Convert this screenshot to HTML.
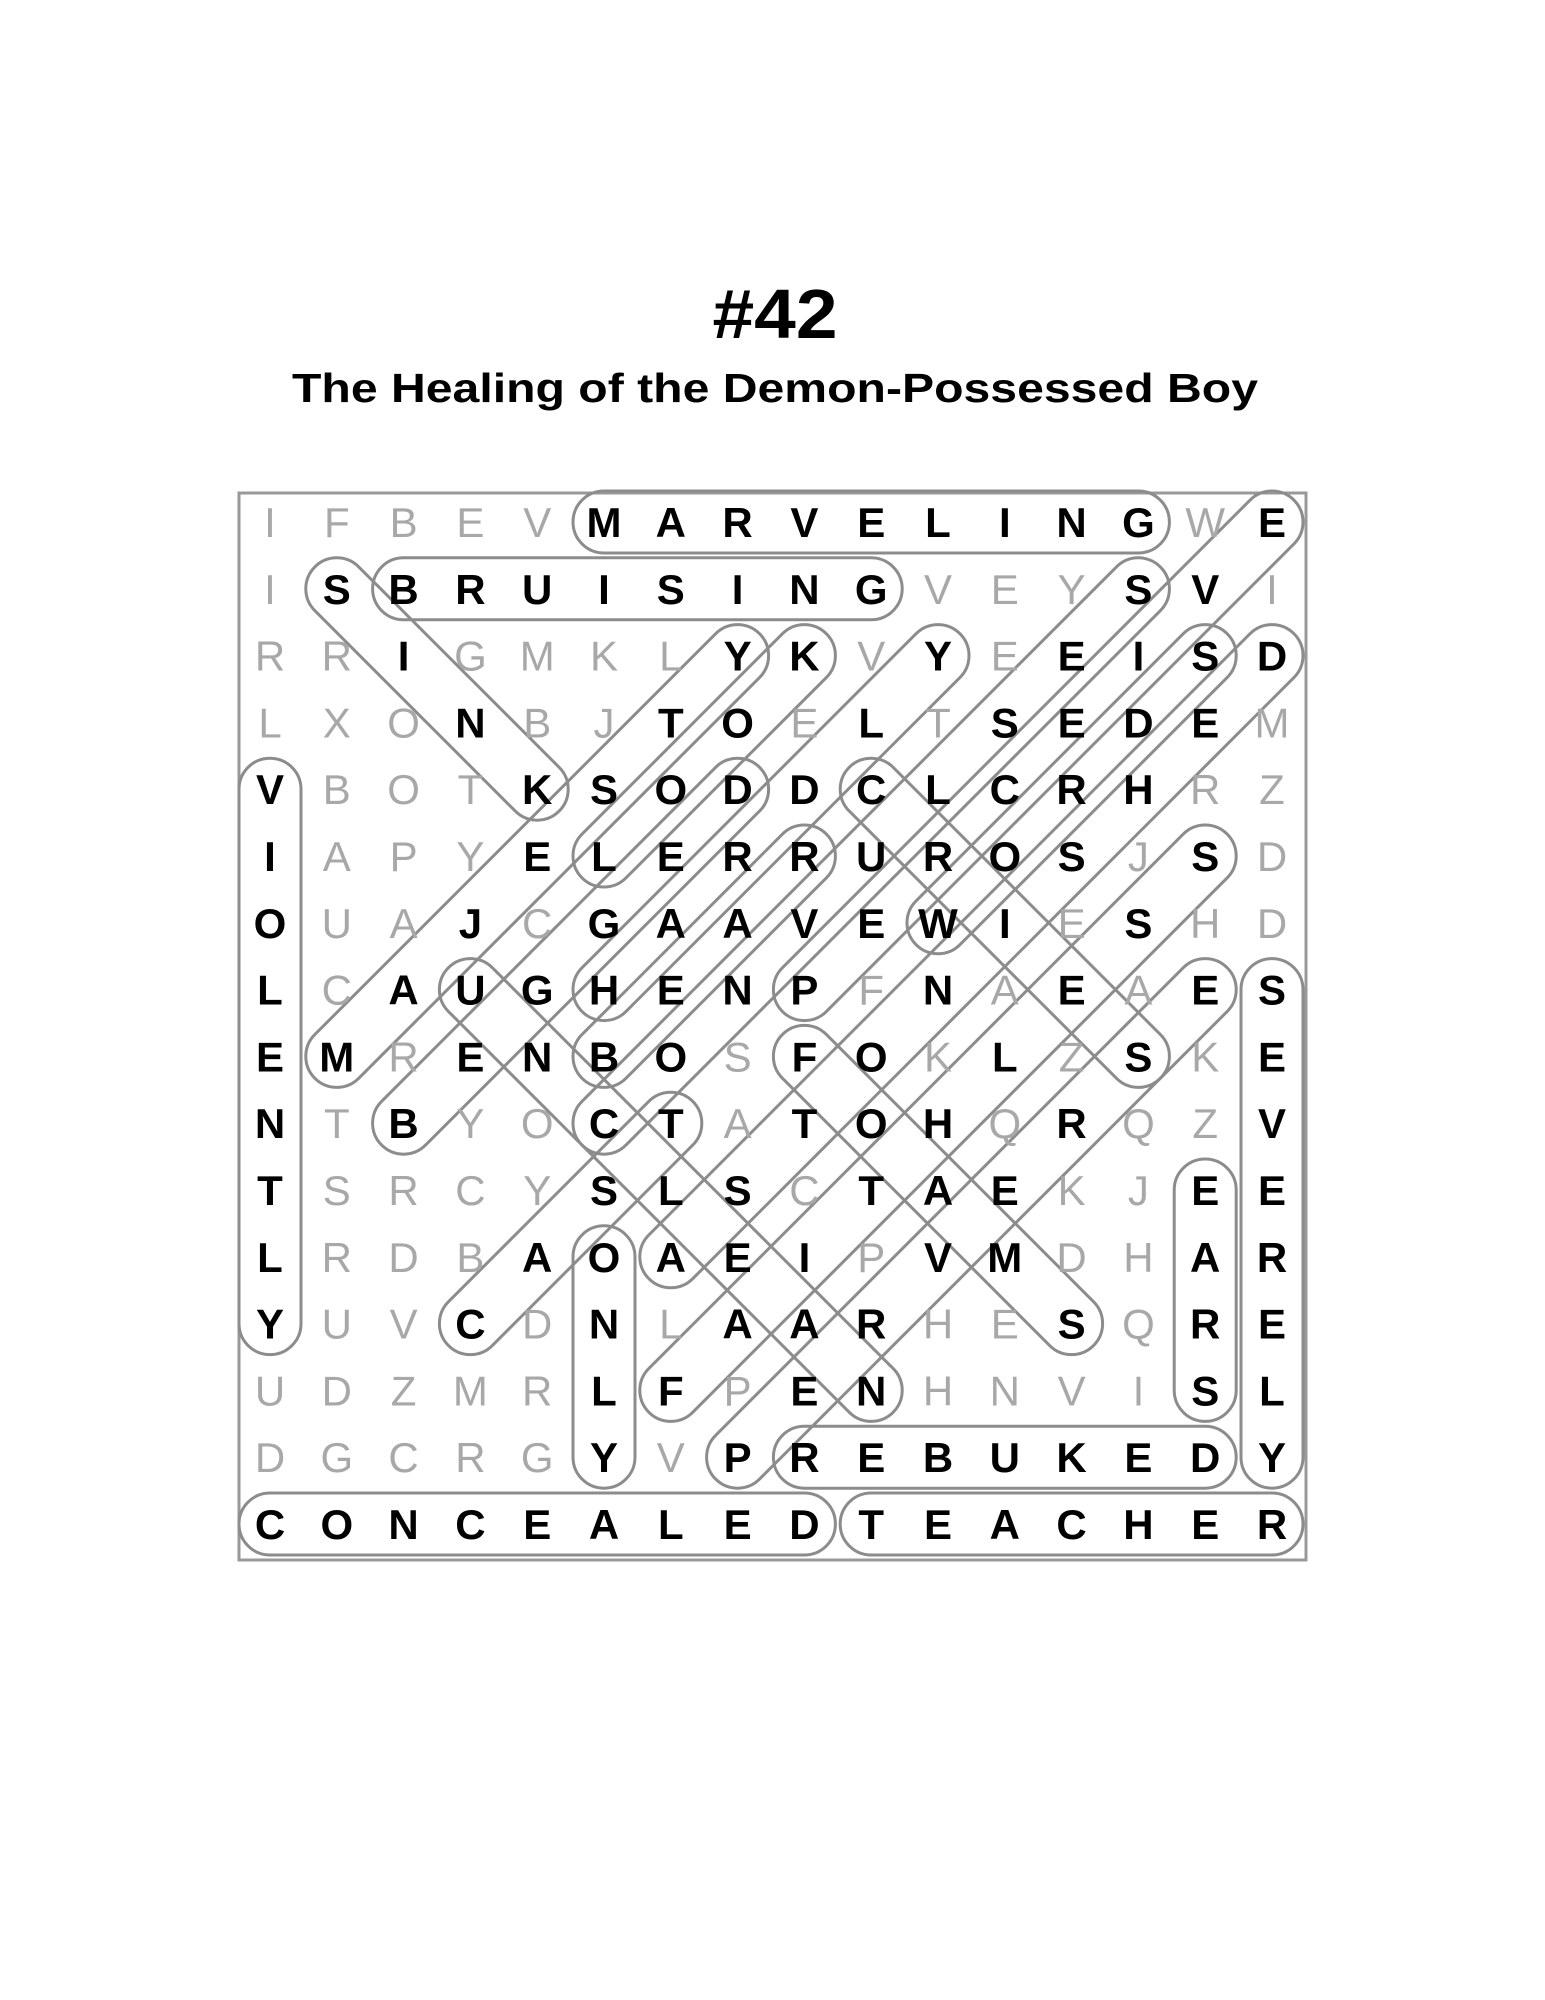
<!DOCTYPE html>
<html><head><meta charset="utf-8"><style>
html,body{margin:0;padding:0;background:#fff;}
svg{display:block;}
.b{font-family:"Liberation Sans",Arial,sans-serif;font-weight:bold;font-size:42px;fill:#000;text-anchor:middle;}
.g{font-family:"Liberation Sans",Arial,sans-serif;font-weight:normal;font-size:42px;fill:#a8a8a8;text-anchor:middle;}
</style></head><body>
<svg id="s" width="1545" height="2000" viewBox="0 0 1545 2000" xmlns="http://www.w3.org/2000/svg">
<rect width="1545" height="2000" fill="#fff"/>
<text x="775" y="338" text-anchor="middle" font-family="Liberation Sans, Arial, sans-serif" font-weight="bold" font-size="70" textLength="125" lengthAdjust="spacingAndGlyphs">#42</text>
<text x="775" y="402" text-anchor="middle" font-family="Liberation Sans, Arial, sans-serif" font-weight="bold" font-size="41" textLength="966" lengthAdjust="spacingAndGlyphs">The Healing of the Demon-Possessed Boy</text>
<rect x="239" y="493" width="1067" height="1067" fill="none" stroke="#999" stroke-width="3"/>
<g id="caps" fill="none" stroke="#8c8c8c" stroke-width="3"></g>
<g id="letters"></g>
</svg>
<script>
var rows=["IFBEVMARVELINGWE","ISBRUISINGVEYSVI","RRIGMKLYKVYEEISD","LXONBJTOELTSEDEM","VBOTKSODDCLCRHRZ","IAPYELERRUROSJSD","OUAJCGAAVEWIESHD","LCAUGHENPFNAEAES","EMRENBOSFOKLZSKE","NTBYOCTATOHQRQZV","TSRCYSLSCTAEKJEE","LRDBAOAEIPVMDHAR","YUVCDNLAARHESQRE","UDZMRLFPENHNVISL","DGCRGYVPREBUKEDY","CONCEALEDTEACHER"];
var words=[[0,5,0,13],[1,2,1,9],[4,0,12,0],[7,15,14,15],[10,14,13,14],[11,5,14,5],[14,8,14,14],[15,0,15,8],[15,9,15,15],
[1,1,4,4],[4,9,8,13],[7,3,13,9],[8,8,12,12],[6,10,2,14],[11,6,2,15],[7,8,0,15],[9,5,1,13],[8,5,5,8],[7,5,2,10],[9,2,4,7],[5,5,2,8],[8,1,2,7],[12,3,9,6],[14,7,7,14],[13,6,5,14]];
function cx(c){return 270+c*66.8;}function cy(r){return 522+r*66.8;}
var bold={};var NS="http://www.w3.org/2000/svg";var caps=document.getElementById("caps");
words.forEach(function(w){var r1=w[0],c1=w[1],r2=w[2],c2=w[3];var n=Math.max(Math.abs(r2-r1),Math.abs(c2-c1));
var dr=n?(r2-r1)/n:0,dc=n?(c2-c1)/n:0;for(var i=0;i<=n;i++){bold[(r1+dr*i)+","+(c1+dc*i)]=1;}
var x1=cx(c1),y1=cy(r1),x2=cx(c2),y2=cy(r2);var L=Math.hypot(x2-x1,y2-y1);var a=Math.atan2(y2-y1,x2-x1)*180/Math.PI;var R=31;
var e=document.createElementNS(NS,"rect");e.setAttribute("x",-R);e.setAttribute("y",-R);e.setAttribute("width",L+2*R);e.setAttribute("height",2*R);e.setAttribute("rx",R);e.setAttribute("ry",R);
e.setAttribute("transform","translate("+x1+","+y1+") rotate("+a+")");caps.appendChild(e);});
var lg=document.getElementById("letters");
for(var r=0;r<16;r++)for(var c=0;c<16;c++){var t=document.createElementNS(NS,"text");t.setAttribute("x",cx(c));t.setAttribute("y",cy(r)+15);t.setAttribute("class",bold[r+","+c]?"b":"g");t.textContent=rows[r][c];lg.appendChild(t);}
</script>
</body></html>
